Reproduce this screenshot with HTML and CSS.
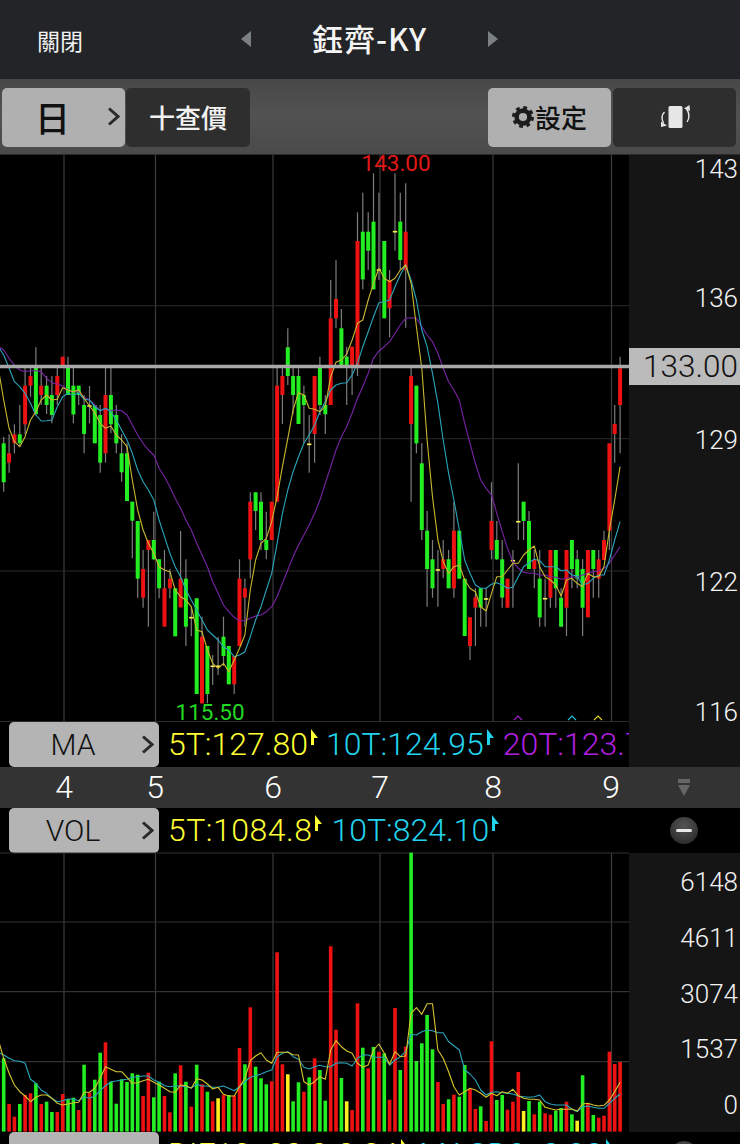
FILE: index.html
```html
<!DOCTYPE html>
<html lang="zh-Hant">
<head>
<meta charset="utf-8">
<title>鈺齊-KY</title>
<link rel="stylesheet" href="styles.css">
</head>
<body>
<main class="app">
  <header class="top">
    <span class="close">關閉</span>
    <span class="tri tri-left"></span>
    <h1 class="title">鈺齊-KY</h1>
    <span class="tri tri-right"></span>
  </header>

  <nav class="tools">
    <button class="tool tool-light tool-day">
      <span class="day">日</span>
      <svg class="chev-lg" viewBox="0 0 13 19"><path d="M2 1.5 11 9.5 2 17.5"/></svg>
    </button>
    <button class="tool tool-dark tool-quote">十查價</button>
    <button class="tool tool-light tool-set">
      <svg class="gear" viewBox="0 0 24 24"><circle cx="12" cy="12" r="6.4"/><circle class="teeth" cx="12" cy="12" r="9.3"/></svg>
      <span>設定</span>
    </button>
    <button class="tool tool-dark" aria-label="rotate">
      <svg class="rotate" viewBox="-1.5 0 36 26">
        <rect class="phone" x="10" y="2" width="14" height="22" rx="1.5"/>
        <path class="arc" d="M6 8C3 11 3 15 5 19"/>
        <path class="head" d="M2.500 17.500 8.500 21.500 2.500 23Z"/>
        <path class="arc" d="M28 5C31 9 31 14 28.500 18"/>
        <path class="head" d="M25.500 4.500 31 1 31.500 7Z"/>
      </svg>
    </button>
  </nav>

  <section class="pane pane-price">
    <svg id="price" class="plot" viewBox="0 155 629 567" width="629" height="567"></svg>
    <div class="axis axis-price">
      <span>143</span><span>136</span><span>129</span><span>122</span><span>116</span>
      <strong class="tag">133.00</strong>
    </div>
  </section>

  <section class="legend-row legend-ma">
    <div class="legend">
      <button class="pick"><span class="pick-name">MA</span><svg class="chev" viewBox="0 0 13 19"><path d="M2 1.500 11 9.500 2 17.500"/></svg></button>
      <span class="val yellow m-ma1">5T:127.80<svg class="flag" viewBox="0 0 10 16"><path d="M2 0 9 9H5V16H2Z"/></svg></span>
      <span class="val cyan m-ma2">10T:124.95<svg class="flag" viewBox="0 0 10 16"><path d="M2 0 9 9H5V16H2Z"/></svg></span>
      <span class="val purple">20T:123.7</span>
    </div>
    <div class="legend-side"></div>
  </section>

  <section class="dates">
    <span>4</span><span>5</span><span>6</span><span>7</span><span>8</span><span>9</span>
    <svg class="collapse" viewBox="0 0 12 17"><rect x="0" y="0" width="12" height="4"/><path d="M0 6H12L6 17Z"/></svg>
  </section>

  <section class="legend-row legend-vol">
    <div class="legend">
      <button class="pick"><span class="pick-name">VOL</span><svg class="chev" viewBox="0 0 13 19"><path d="M2 1.500 11 9.500 2 17.500"/></svg></button>
      <span class="val yellow m-vol1">5T:1084.8<svg class="flag" viewBox="0 0 10 16"><path d="M2 0 9 9H5V16H2Z"/></svg></span>
      <span class="val cyan m-vol2">10T:824.10<svg class="flag" viewBox="0 0 10 16"><path d="M2 0 9 9H5V16H2Z"/></svg></span>
    </div>
    <div class="legend-end"><span class="minus"></span></div>
  </section>

  <section class="pane pane-vol">
    <svg id="volume" class="plot" viewBox="0 853 629 279" width="629" height="279"></svg>
    <div class="axis axis-vol">
      <span>6148</span><span>4611</span><span>3074</span><span>1537</span><span>0</span>
    </div>
  </section>

  <section class="legend-row legend-macd">
    <div class="legend">
      <button class="pick"><span class="pick-name">MACD</span></button>
      <span class="val yellow m-macd1">DIF12:-30.0-0.34<svg class="flag" viewBox="0 0 10 16"><path d="M2 0 9 9H5V16H2Z"/></svg></span>
      <span class="val cyan m-macd2">MACD9:-0.30<svg class="flag" viewBox="0 0 10 16"><path d="M2 0 9 9H5V16H2Z"/></svg></span>
      <span class="val purple">O</span>
    </div>
    <div class="legend-end"><span class="minus"></span></div>
  </section>
</main>
<script src="chart.js"></script>
</body>
</html>
```

FILE: styles.css
```css
* { box-sizing: border-box; }

html, body { margin: 0; padding: 0; background: #000; }

.app {
  width: 740px;
  height: 1144px;
  overflow: hidden;
  display: flex;
  flex-direction: column;
  font-family: Roboto, "Noto Sans CJK TC", sans-serif;
  color: #fff;
  background: #000;
}

button { font: inherit; border: 0; padding: 0; color: inherit; }

/* header */
.top {
  flex: 0 0 79px;
  display: grid;
  grid-template-columns: 241px 10px 237px 10px;
  align-items: center;
  background: #232427;
  padding-bottom: 2px;
}
.close {
  padding: 3px 0 0 37px;
  font: 400 23px/1 "Noto Sans CJK TC", sans-serif;
  color: #f0f0f0;
}
.title {
  margin: 0 0 2px;
  text-align: center;
  font: 500 31px/1 "Noto Sans CJK TC", sans-serif;
  letter-spacing: 1px;
  color: #f4f4f4;
}
.tri { width: 0; height: 0; border-top: 8px solid transparent; border-bottom: 8px solid transparent; }
.tri-left { border-right: 10px solid #7b8080; }
.tri-right { border-left: 10px solid #7b8080; }

/* toolbar */
.tools {
  flex: 0 0 76px;
  display: flex;
  align-items: flex-start;
  padding: 9px 4px 0 2px;
  background: linear-gradient(#484848, #525252 50%, #4a4a4a);
  border-bottom: 1px solid #2c2c2c;
}
.tool {
  width: 123px;
  height: 59px;
  border-radius: 5px;
  display: flex;
  align-items: center;
  justify-content: center;
  padding-bottom: 2px;
  font: 500 26px/1 "Noto Sans CJK TC", sans-serif;
}
.tool-light { background: #b0b0b0; color: #111; }
.tool-dark { background: #2e2e2e; color: #f2f2f2; }
.tool-day { justify-content: flex-start; padding: 0 5px 2px 33px; margin-right: 1px; }
.tool-quote { width: 124px; }
.tool-set { margin-left: auto; margin-right: 2px; }
.day { font: 500 35px/1 "Noto Sans CJK TC", sans-serif; }
.chev-lg { width: 13px; height: 19px; margin-left: auto; }
.chev-lg path, .chev path { fill: none; stroke: #2a2a2a; stroke-width: 3; }
.gear { width: 24px; height: 24px; margin-left: -1px; }
.gear circle { fill: none; stroke: #1c1c1c; stroke-width: 4.6; }
.gear .teeth { stroke-width: 3.4; stroke-dasharray: 3.7 3.6; }
.rotate { width: 36px; height: 26px; }
.phone { fill: #e6e6e6; }
.arc { fill: none; stroke: #e6e6e6; stroke-width: 1.4; }
.head { fill: #e6e6e6; }

/* plots */
.pane { display: grid; grid-template-columns: 629px 111px; }
.pane-price { flex: 0 0 567px; }
.pane-vol { flex: 0 0 279px; }
.plot { display: block; background: #000; overflow: visible; }
.hi, .lo { font: 400 22.500px Roboto, sans-serif; }
.hi { fill: #e01818; }
.lo { fill: #22d922; }

.axis {
  display: grid;
  justify-items: end;
  padding-right: 2px;
  background: #151515;
  color: #f2f2f2;
  font-weight: 300;
  font-size: 26px;
  line-height: 26px;
}
.axis-price {
  position: relative;
  padding-top: 1px;
  grid-template-rows: 129px 142px 142px 130px 23px;
}
.axis-vol {
  padding-top: 16px;
  grid-template-rows: repeat(4, 55.750px) 26px;
  align-content: start;
}
.tag {
  position: absolute;
  top: 193px;
  left: 0;
  width: 111px;
  height: 37px;
  padding-right: 2px;
  text-align: right;
  font-weight: 300;
  font-size: 31.500px;
  line-height: 37px;
  color: #111;
  background: #bbb;
}

/* indicator rows */
.legend-row { display: grid; grid-template-columns: 629px 111px; flex: 0 0 45px; }
.legend {
  display: flex;
  align-items: flex-start;
  overflow: hidden;
  white-space: nowrap;
  padding-left: 9px;
  background: #000;
  font-weight: 300;
  font-size: 32px;
  line-height: 45px;
}
.legend-side { background: #151515; }
.legend-end { background: #000; display: flex; justify-content: flex-end; padding: 9px 42px 0 0; }
.pick {
  flex: 0 0 150px;
  height: 45px;
  margin-right: 9px;
  display: flex;
  align-items: center;
  border-radius: 5px;
  background: #b4b4b4;
  color: #111;
  font-weight: 300;
  font-size: 30px;
  line-height: 45px;
}
.pick-name { width: 128px; text-align: center; }
.chev { width: 13px; height: 19px; margin-left: 4px; }
.val { display: inline-flex; align-items: flex-start; }
.flag { width: 10px; height: 16px; margin: 7px 0 0 1px; }
.yellow { color: #ffff33; }
.cyan { color: #22d3ee; }
.purple { color: #b01fe0; }
.yellow .flag { fill: #ffff33; }
.cyan .flag { fill: #22d3ee; }
.m-ma1 { margin-right: 7px; }
.m-ma2 { margin-right: 8px; }
.m-vol1 { margin-right: 8px; letter-spacing: 0.5px; }
.m-macd1 { margin-right: 10px; }
.m-macd2 { margin-right: 10px; }
.minus {
  width: 28px;
  height: 27px;
  border-radius: 50%;
  background: radial-gradient(circle at 50% 35%, #555, #2c2c2c 80%);
  position: relative;
}
.minus::after {
  content: "";
  position: absolute;
  left: 6px;
  right: 6px;
  top: 12px;
  height: 3px;
  border-radius: 2px;
  background: #e8e8e8;
}

/* date band */
.dates {
  flex: 0 0 41px;
  display: grid;
  grid-template-columns: 128px 54px 182px 32px 194px 42px 46px 12px;
  align-items: center;
  text-align: center;
  background: #333;
  font-weight: 300;
  font-size: 32px;
  line-height: 41px;
  color: #fff;
}
.collapse { grid-column: 8; width: 12px; height: 17px; fill: #666; }
```

FILE: chart.js
```js
// y values below are in reference units: real y = 340 + v / 3 for the price plot.
var candles = [
  ['g',310,427,290,455],['r',340,368,283,398],['r',283,310,253,340],['g',283,310,195,320],['r',137,253,80,283],
  ['r',108,137,80,170],['g',83,222,22,225],['r',137,165,80,195],['g',137,195,108,222],['g',165,225,108,250],
  ['r',108,165,80,195],['r',50,75,50,80],['g',83,165,50,165],['g',137,223,80,250],['g',137,165,137,195],
  ['g',195,282,165,340],['d',198,198,138,250],['g',195,310,195,310],['g',225,368,195,398],['r',165,340,80,368],
  ['g',165,253,80,280],['g',225,310,195,340],['g',340,397,283,425],['g',340,483,310,483],['g',485,542,485,655],
  ['g',543,716,543,773],['r',687,773,630,803],['r',600,630,600,860],['g',600,658,515,660],['g',658,745,658,775],
  ['r',745,860,630,860],['r',716,745,687,775],['g',745,889,745,889],['r',716,802,573,802],['g',716,860,658,918],
  ['d',833,833,800,889],['g',775,1062,775,1062],['r',890,1090,830,1090],['g',918,1062,918,1090],['d',979,979,945,1035],
  ['d',979,979,890,1005],['g',890,948,830,978],['g',918,1033,918,1033],['r',948,1033,948,1062],['r',716,918,658,918],
  ['r',745,773,716,860],['r',485,658,457,715],['g',457,513,457,570],['g',485,600,457,630],['g',600,630,515,658],
  ['r',485,600,485,600],['r',137,485,83,485],['r',108,165,83,252],['g',22,108,-35,135],['g',108,165,80,223],
  ['g',108,252,85,252],['g',165,195,137,310],['d',313,313,225,398],['r',108,282,108,368],['g',83,195,50,225],
  ['g',195,223,165,282],['r',-65,195,-180,195],['r',-123,-65,-240,-35],['g',-35,75,-93,80],['g',50,75,20,195],
  ['r',20,75,20,165],['r',-297,75,-383,108],['g',-325,-182,-442,-152],['g',-325,-268,-383,-210],['g',-355,-152,-500,-152],
  ['d',-210,-210,-442,-180],['g',-297,-65,-297,-65],['r',-180,-95,-210,-8],['d',-325,-325,-500,-268],['g',-355,-240,-442,-210],
  ['r',-325,-210,-470,-37],['r',108,252,80,485],['g',137,310,137,340],['g',370,570,310,600],['g',572,687,513,800],
  ['g',658,745,600,773],['d',690,690,630,800],['r',658,687,600,715],['g',658,745,630,745],['r',572,745,485,773],
  ['g',572,716,572,716],['g',716,888,716,888],['r',832,918,832,960],['r',772,803,745,918],['g',745,803,745,860],
  ['d',777,777,745,860],['r',543,630,427,658],['g',600,658,543,660],['g',658,773,600,803],['r',716,803,716,803],
  ['d',662,662,630,803],['d',545,545,370,600],['g',485,543,485,600],['g',543,687,513,687],['r',660,687,630,745],
  ['g',716,832,630,860],['d',776,776,716,860],['r',630,773,630,803],['g',630,745,630,803],['g',773,860,745,860],
  ['r',630,803,630,888],['g',600,687,600,745],['g',658,716,630,745],['g',687,803,658,888],['r',630,832,630,832],
  ['g',630,687,630,773],['r',658,716,630,773],['r',600,660,572,660],['r',310,572,310,630],['r',252,282,195,368],
  ['r',85,195,50,340]
];

var ma5 = [85,180,265,305,320,290,240,215,180,165,180,178,143,150,155,150,175,198,218,250,265,258,285,300,320,420,510,570,610,640,680,690,695,750,770,780,800,870,875,930,970,985,970,995,960,925,885,750,660,610,595,545,470,380,295,210,158,165,205,208,215,
  200,110,67,60,42,0,-50,-60,-120,-170,-215,-185,-175,-185,-210,-225,-170,-40,85,300,470,600,665,700,680,675,720,745,755,800,813,760,710,710,690,670,670,645,630,618,680,710,720,735,768,720,715,730,740,700,710,710,680,570,480,380];
var ma10 = [20,45,85,125,140,160,190,225,243,242,240,200,170,160,165,160,178,180,200,212,205,215,240,270,300,340,390,425,450,480,540,590,640,680,710,750,780,810,840,870,885,900,920,930,950,945,935,890,840,800,750,700,610,520,450,395,350,310,285,255,215,
  185,150,135,130,128,105,70,20,-25,-70,-112,-115,-120,-160,-195,-225,-180,-120,-30,20,100,190,300,400,480,570,660,700,735,745,745,733,728,735,745,742,710,680,668,658,662,680,680,680,692,690,705,708,735,730,715,705,705,660,600,545];
var ma20 = [20,30,55,75,90,95,92,92,95,115,128,132,138,150,155,155,172,180,195,212,205,212,210,212,225,255,285,310,330,345,385,410,440,475,505,540,570,610,645,680,725,760,795,815,832,842,842,835,828,825,815,800,770,730,690,650,615,585,555,520,480,
  430,380,330,290,260,220,175,140,100,55,33,20,5,-20,-45,-65,-67,-65,-40,-15,5,40,85,125,150,180,250,310,370,420,445,465,520,575,625,665,685,697,700,700,705,705,710,712,718,715,710,712,705,700,695,693,685,670,645,620];

var volBars = 'g625 r762 r800 g762 r735 r730 g700 r762 g755 g786 r786 r732 g747 g743 r780 g644 r728 g689 g608 r577 g695 g761 g688 g696 g670 g674 r738 r668 g742 g695 r738 r787 g670 r646 g695 r770 g644 r703 g725 r754 y745 r735 g735 r737 r594 g643 r472 g650 g685 g703 r694 r307 r643 y673 g754 g697 r725 g682 r625 g660 g752 r289 r539 g684 y754 r780 r460 g593 r655 ' +
  'g591 r605 g610 r749 r474 g660 r590 g8 g633 g580 g495 g598 r696 r762 g748 r734 g740 g645 r717 r777 g769 r813 r574 g750 g735 r779 r755 r666 y783 g753 r793 g755 r790 r794 g782 g774 r755 g793 y812 g676 r762 g795 r803 r797 r605 r642 r636';

var vol5 = [570,625,670,705,725,738,755,742,735,735,745,760,765,762,758,757,727,727,715,685,650,658,665,665,682,700,698,692,688,697,705,715,725,727,705,707,715,686,690,702,717,712,733,738,738,710,685,632,618,608,630,640,607,607,607,614,615,695,705,695,680,688,600,572,590,603,610,640,652,645,
  600,582,610,643,605,620,618,490,473,493,461,461,600,625,665,710,735,725,715,720,730,742,730,737,725,730,718,737,745,748,748,750,772,776,780,778,778,777,783,762,760,765,768,766,750,725,697];
var vol10 = [607,615,625,632,634,640,688,700,720,730,745,755,752,747,747,752,740,745,738,722,707,695,693,690,688,682,680,678,678,690,697,707,710,708,708,710,713,703,708,708,712,712,708,715,722,710,695,682,677,672,665,660,620,610,605,620,628,652,657,650,646,650,650,640,638,640,648,625,615,615,
  622,622,622,646,630,620,605,553,555,545,540,542,548,548,575,587,600,660,672,690,720,735,727,725,728,730,732,738,740,742,740,735,755,762,765,765,765,778,785,770,768,772,775,775,760,745,732];

var COLORS = { g: '#22ee22', r: '#ee1111', y: '#ffee22', d: '#ffee55' };
var STEP = 5.36, X0 = 3.7;

function xAt(i) { return X0 + STEP * i; }
function priceY(v) { return 340 + v / 3; }
function volY(v) { return 850 + v / 3; }
function fmt(n) { return n.toFixed(1); }

function polyline(values, toY, color) {
  var pts = values.map(function (v, k) { return fmt(xAt(k - 1)) + ',' + fmt(toY(v)); }).join(' ');
  return '<polyline points="' + pts + '" fill="none" stroke="' + color + '" stroke-width="1.1" stroke-linejoin="round"/>';
}

function vline(x, y1, y2, color, width) {
  return '<line x1="' + x + '" x2="' + x + '" y1="' + y1 + '" y2="' + y2 + '" stroke="' + color + '" stroke-width="' + width + '"/>';
}
function hline(y, x2, color, width) {
  return '<line x1="0" x2="' + x2 + '" y1="' + y + '" y2="' + y + '" stroke="' + color + '" stroke-width="' + width + '"/>';
}

var GRID_X = [64, 155.5, 273, 380, 493, 611.5];

function drawPrice() {
  var s = '';
  GRID_X.forEach(function (x) { s += vline(x, 155, 722, '#3c3c3c', 1.2); });
  [305.7, 438.7, 571].forEach(function (y) { s += hline(y, 629, '#2a2a2a', 1); });
  s += hline(721.5, 629, '#2a2a2a', 1);

  candles.forEach(function (c, i) {
    var x = fmt(xAt(i));
    s += vline(x, fmt(priceY(c[3])), fmt(priceY(c[4])), '#7d7d7d', 1.2);
  });
  candles.forEach(function (c, i) {
    var x = xAt(i);
    if (c[0] === 'd') {
      s += '<rect x="' + fmt(x - 2.2) + '" y="' + fmt(priceY(c[1]) - 0.8) + '" width="4.4" height="1.6" fill="' + COLORS.d + '"/>';
    } else {
      s += '<rect x="' + fmt(x - 2) + '" y="' + fmt(priceY(c[1])) + '" width="4" height="' + fmt((c[2] - c[1]) / 3) + '" fill="' + COLORS[c[0]] + '"/>';
    }
  });
  s += polyline(ma20, priceY, '#7a24a6');
  s += polyline(ma10, priceY, '#2aa6bc');
  s += polyline(ma5, priceY, '#c9b82e');
  s += hline(366.5, 629, '#a8a8a8', 3.6);

  s += '<text class="hi" x="361.500" y="171">143.00</text>';
  s += '<text class="lo" x="175.500" y="720">115.50</text>';
  [[518, '#a425d0'], [572, '#22c8e0'], [598, '#e6d820']].forEach(function (m) {
    s += '<polyline points="' + (m[0] - 4) + ',720 ' + m[0] + ',716 ' + (m[0] + 4) + ',720" fill="none" stroke="' + m[1] + '" stroke-width="1.1"/>';
  });
  document.getElementById('price').innerHTML = s;
}

function drawVolume() {
  var s = '';
  GRID_X.forEach(function (x) { s += vline(x, 853, 1132, '#3c3c3c', 1.2); });
  [853, 922, 991.7, 1061.7].forEach(function (y) { s += hline(y, 629, '#333', 1.2); });
  volBars.split(' ').forEach(function (b, i) {
    var top = volY(parseInt(b.slice(1), 10));
    s += '<rect x="' + fmt(xAt(i) - 1.8) + '" y="' + fmt(top) + '" width="3.6" height="' + fmt(1131.6 - top) + '" fill="' + COLORS[b[0]] + '"/>';
  });
  s += polyline(vol10, volY, '#2aa6bc');
  s += polyline(vol5, volY, '#d8c52e');
  document.getElementById('volume').innerHTML = s;
}

drawPrice();
drawVolume();
```
